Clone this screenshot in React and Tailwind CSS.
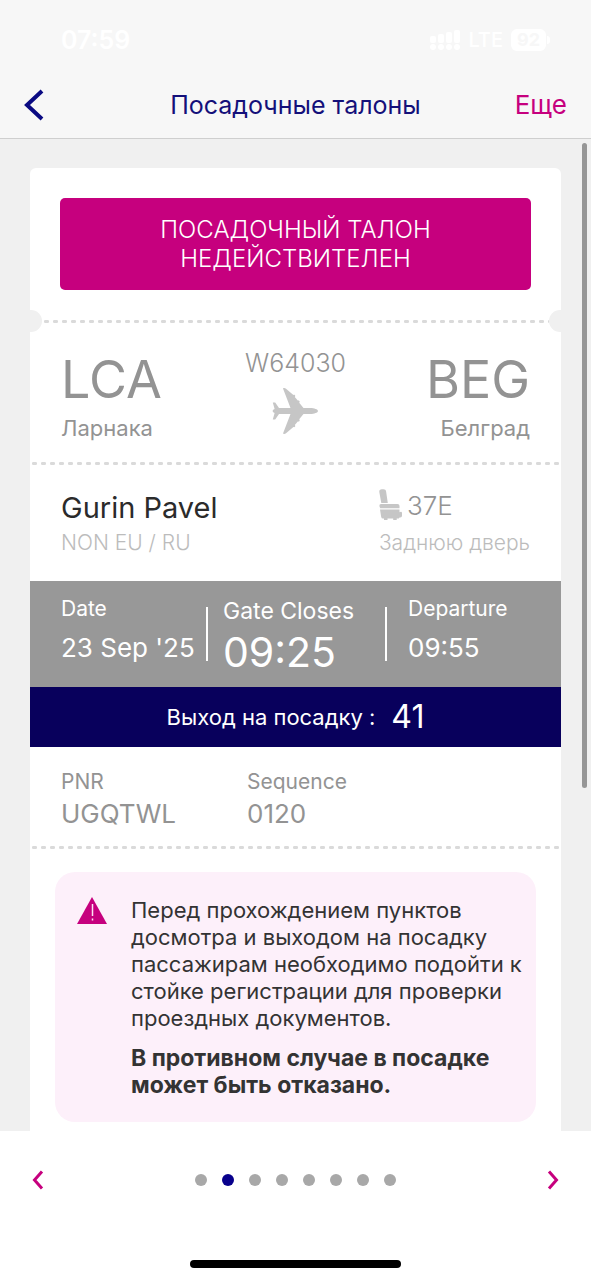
import React from "react";

const dotted =
  "h-[3px] bg-[radial-gradient(ellipse_3px_2px_at_center,#dadada_75%,transparent)] bg-[length:9px_3px] bg-repeat-x";

function StatusBar() {
  return (
    <div className="flex h-20 items-center justify-between pr-[41px] pl-[61px] text-white">
      <span className="text-[25px] leading-8 font-semibold">07:59</span>
      <div className="flex items-center gap-2">
        <svg className="h-5 w-[30px]" viewBox="0 0 30 20" fill="currentColor" aria-hidden="true">
          <rect x="0" y="6" width="6" height="7" rx="2" />
          <rect x="8" y="4" width="6" height="9" rx="2" />
          <rect x="16" y="2" width="6" height="11" rx="2" />
          <rect x="24" y="0" width="6" height="13" rx="2" />
          <circle cx="3" cy="17" r="3" />
          <circle cx="11" cy="17" r="3" />
          <circle cx="19" cy="17" r="3" />
          <circle cx="27" cy="17" r="3" />
        </svg>
        <span className="text-xl leading-6 font-medium">LTE</span>
        <div className="flex items-center gap-px">
          <span className="rounded-md bg-white px-1.5 text-lg leading-[22px] font-bold text-[#f7f7f7]">92</span>
          <span className="h-2 w-[3px] rounded-r-full bg-white" />
        </div>
      </div>
    </div>
  );
}

function Header() {
  return (
    <header className="border-b border-[#cfcfcf] bg-[#f7f7f7]">
      <StatusBar />
      <div className="grid h-[58px] grid-cols-[1fr_auto_1fr] items-center px-6 pb-2">
        <button type="button" aria-label="Назад" className="justify-self-start text-[#0a0a82]">
          <svg className="h-8 w-5" viewBox="0 0 20 32" fill="none" stroke="currentColor" strokeWidth="4" aria-hidden="true">
            <path d="M18 2 3 16l15 14" />
          </svg>
        </button>
        <h1 className="text-[25px] leading-8 text-[#14107a]">Посадочные талоны</h1>
        <button type="button" className="justify-self-end text-[26px] leading-8 text-[#c6007e]">
          Еще
        </button>
      </div>
    </header>
  );
}

function Plane() {
  return (
    <svg className="h-[46px] w-[46px] text-[#c6c6c6]" viewBox="0 0 46 46" fill="currentColor" aria-hidden="true">
      <path d="M46 23c0 1.600-4 3-7.500 3H31.500l-4.300 5.200c1 .8.300 2.800-1.400 2.200l-3 3.600c1 .8.200 2.700-1.400 2L14 45.200c-.8.900-2.500 1-3 .3L18.500 26H7L3.200 31.500H.8L2.600 25 .8 24v-2l1.800-1L.8 14.500h2.400L7 20h11.500L11 .5c.5-.7 2.200-.6 3 .3l7.400 6.200c1.600-.7 2.400 1.200 1.400 2l3 3.600c1.700-.6 2.400 1.400 1.400 2.200l4.300 5.200h7c3.500 0 7.500 1.400 7.500 3Z" />
    </svg>
  );
}

function Seat() {
  return (
    <svg className="h-8 w-6 text-[#c6c6c6]" viewBox="0 0 24 32" fill="currentColor" aria-hidden="true">
      <path d="M.3 3C0 1.200 1.200.2 2.800.2h1.700c1.500 0 2.400.8 2.600 2.200L8.800 14H2.300Z" />
      <path d="M2 15h16.500q2 0 2 2v2.200H1.200L.4 17Q.2 15 2 15Z" />
      <path d="M1 20.500h19.500v2.700q2.500-1.200 2.500 1v2.600q0 2-2.500 1.600-.4 1.200-2 1.200h-.8V31h-3.500v-1.400H8.500V31H5v-1.400H4q-1.500 0-1.800-1.600Z" />
    </svg>
  );
}

function Notch({ side }) {
  return (
    <span
      className={
        side === "left"
          ? "absolute -top-[10px] -left-[10px] h-[22px] w-[22px] rounded-full bg-[#f0f0f0]"
          : "absolute -top-[10px] -right-[10px] h-[22px] w-[22px] rounded-full bg-[#f0f0f0]"
      }
    />
  );
}

function BoardingPass() {
  return (
    <article className="mx-[30px] mt-[29px] flex-1 rounded-t-md bg-white text-[#939393]">
      <div className="px-[30px] py-[30px]">
        <p className="rounded-[5px] bg-[#c6007e] px-20 py-[17px] text-center text-2xl leading-[29px] font-light text-white">
          ПОСАДОЧНЫЙ ТАЛОН НЕДЕЙСТВИТЕЛЕН
        </p>
      </div>

      <div className="relative">
        <div className={"mx-3 " + dotted} />
        <Notch side="left" />
        <Notch side="right" />
      </div>

      <section className="grid h-[139px] grid-cols-[1fr_auto_1fr] px-[31px] pt-6">
        <div>
          <p className="text-[52px] leading-[65px]">LCA</p>
          <p className="text-[22px] leading-8">Ларнака</p>
        </div>
        <div className="flex flex-col items-center">
          <p className="text-[25px] leading-8 font-light">W64030</p>
          <div className="mt-[9px]">
            <Plane />
          </div>
        </div>
        <div className="text-right">
          <p className="text-[52px] leading-[65px]">BEG</p>
          <p className="text-[22px] leading-8">Белград</p>
        </div>
      </section>

      <div className={dotted} />

      <section className="flex h-[116px] justify-between px-[31px] pt-6">
        <div>
          <p className="text-[29px] leading-[38px] text-[#2b2b2b]">Gurin Pavel</p>
          <p className="text-[21px] leading-8 font-light text-[#bcbcbc]">NON EU / RU</p>
        </div>
        <div>
          <div className="flex h-[38px] items-start gap-1">
            <Seat />
            <p className="text-[26px] leading-[34px] font-light">37E</p>
          </div>
          <p className="text-[21px] leading-8 font-light text-[#bcbcbc]">Заднюю дверь</p>
        </div>
      </section>

      <section className="grid h-[106px] grid-cols-[145fr_2px_177fr_2px_143fr] items-start bg-[#989898] px-[31px] pt-3 whitespace-nowrap text-white">
        <div className="flex flex-col gap-[7px]">
          <p className="text-[21px] leading-8">Date</p>
          <p className="text-[26px] leading-8">23 Sep &#39;25</p>
        </div>
        <div className="mt-[14px] h-[54px] bg-white" />
        <div className="pl-[15px]">
          <p className="text-[23px] leading-9">Gate Closes</p>
          <p className="text-[41px] leading-[46px]">09:25</p>
        </div>
        <div className="mt-[14px] h-[54px] bg-white" />
        <div className="flex flex-col gap-[7px] pl-[21px]">
          <p className="text-[21px] leading-8">Departure</p>
          <p className="text-[26px] leading-8">09:55</p>
        </div>
      </section>

      <section className="flex h-[60px] items-center justify-center gap-4 bg-[#08005c] text-white">
        <p className="text-[22px] leading-8">Выход на посадку :</p>
        <p className="text-[32px] leading-10">41</p>
      </section>

      <section className="grid h-[99px] grid-cols-[186fr_283fr] px-[31px] pt-[19px]">
        <div>
          <p className="text-[21px] leading-8">PNR</p>
          <p className="text-[26px] leading-8">UGQTWL</p>
        </div>
        <div>
          <p className="text-[21px] leading-8">Sequence</p>
          <p className="text-[26px] leading-8">0120</p>
        </div>
      </section>

      <div className={dotted} />

      <section
        role="note"
        className="mx-[25px] mt-[23px] mb-[9px] flex h-[250px] gap-6 rounded-[20px] bg-[#fdf0fa] py-[25px] pr-3 pl-[22px] text-[22px] leading-[27px] text-[#333]"
      >
        <svg className="h-7 w-[30px] shrink-0" viewBox="0 0 30 28" aria-hidden="true">
          <path d="M15 0 30 27H0Z" fill="#c6007e" />
          <path d="M15.500 7v12M15.500 21.500v2" stroke="#fbe3f3" strokeWidth="1.500" />
        </svg>
        <div className="flex flex-col gap-[13px]">
          <p>
            Перед прохождением пунктов досмотра и выходом на посадку пассажирам необходимо подойти к
            стойке регистрации для проверки проездных документов.
          </p>
          <p className="text-[23px] leading-[27px] font-bold">В противном случае в посадке может быть отказано.</p>
        </div>
      </section>
    </article>
  );
}

const passes = [1, 2, 3, 4, 5, 6, 7, 8];

function Pager() {
  return (
    <footer className="bg-white">
      <nav className="flex h-[98px] items-center justify-between px-8">
        <button type="button" aria-label="Предыдущий" className="text-[#c6007e]">
          <svg className="h-5 w-3" viewBox="0 0 12 20" fill="none" stroke="currentColor" strokeWidth="3" aria-hidden="true">
            <path d="M10 1.500 2.500 10l7.500 8.500" />
          </svg>
        </button>
        <div className="flex gap-[15px]">
          {passes.map((n) => (
            <button
              key={n}
              type="button"
              aria-label={"Талон " + n}
              className={n === 2 ? "h-3 w-3 rounded-full bg-[#08008c]" : "h-3 w-3 rounded-full bg-[#a8a8a8]"}
            />
          ))}
        </div>
        <button type="button" aria-label="Следующий" className="text-[#c6007e]">
          <svg className="h-5 w-3" viewBox="0 0 12 20" fill="none" stroke="currentColor" strokeWidth="3" aria-hidden="true">
            <path d="m2 1.500 7.500 8.500L2 18.500" />
          </svg>
        </button>
      </nav>
      <div className="flex h-[51px] items-end justify-center pb-3">
        <div className="h-2 w-[211px] rounded-full bg-black" />
      </div>
    </footer>
  );
}

export default function App() {
  return (
    <div className="flex min-h-screen flex-col font-['Inter','Noto_Sans',sans-serif]">
      <Header />
      <main className="relative flex flex-1 flex-col bg-[#f0f0f0]">
        <BoardingPass />
        <div className="absolute top-1 right-1 h-[65%] w-[5px] rounded-full bg-[#969696]" />
      </main>
      <Pager />
    </div>
  );
}
